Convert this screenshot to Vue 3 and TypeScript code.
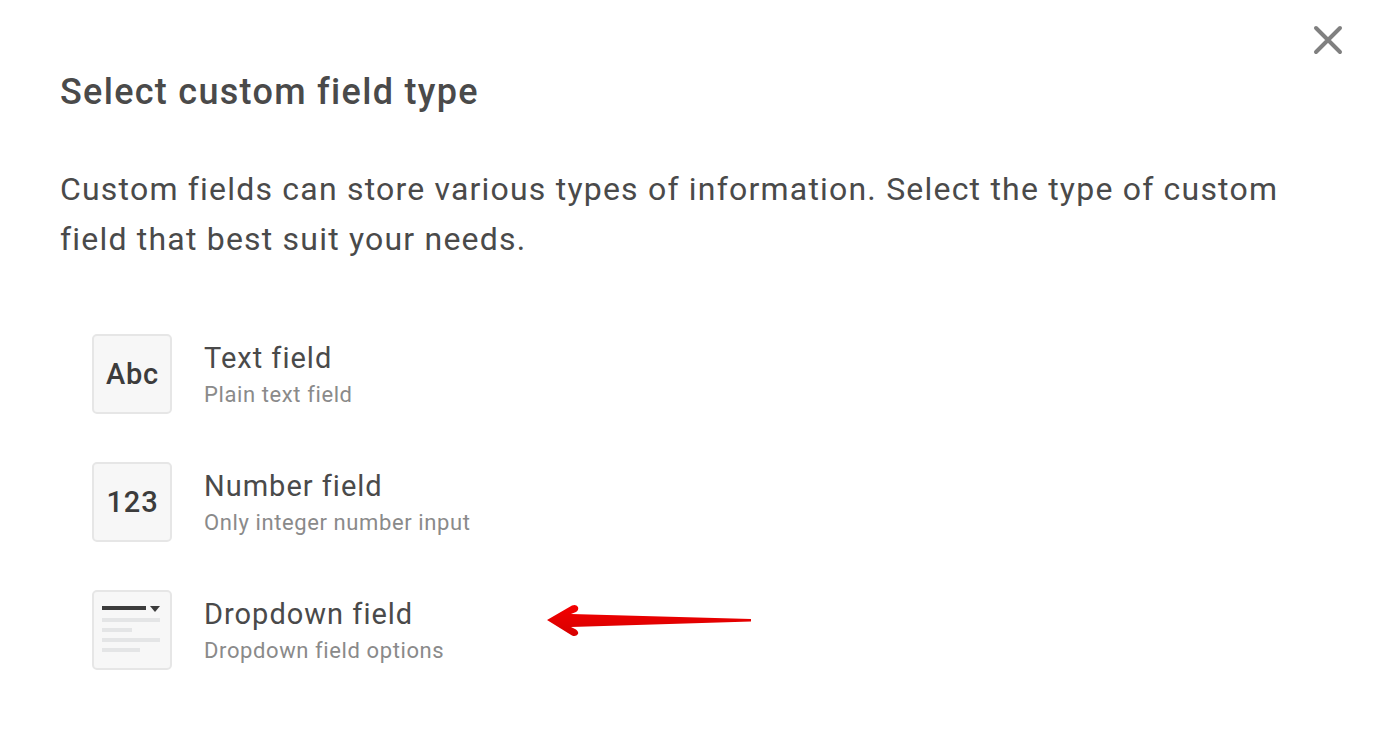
<script setup lang="ts">
interface FieldType {
  name: string
  hint: string
  badge?: string
}

const fieldTypes: FieldType[] = [
  { name: 'Text field', hint: 'Plain text field', badge: 'Abc' },
  { name: 'Number field', hint: 'Only integer number input', badge: '123' },
  { name: 'Dropdown field', hint: 'Dropdown field options' },
]
</script>

<template>
  <div class="dialog">
    <svg class="close" width="30" height="30" viewBox="0 0 30 30" aria-label="Close">
      <path d="M3 3 L27 27 M27 3 L3 27" stroke="#808080" stroke-width="4" stroke-linecap="round" fill="none" />
    </svg>

    <h1 class="title">Select custom field type</h1>
    <p class="intro">
      Custom fields can store various types of information. Select the type of custom field that best suit your needs.
    </p>

    <ul class="types">
      <li v-for="field in fieldTypes" :key="field.name" class="type">
        <div class="badge">
          <template v-if="field.badge">{{ field.badge }}</template>
          <svg v-else width="76" height="76" viewBox="0 0 76 76">
            <rect x="8" y="14" width="44" height="4" fill="#3c3c3c" />
            <path d="M56 14 H66 L61 20 Z" fill="#3c3c3c" />
            <rect x="8" y="26" width="58" height="4" fill="#e4e5e6" />
            <rect x="8" y="36" width="30" height="4" fill="#e4e5e6" />
            <rect x="8" y="46" width="58" height="4" fill="#e4e5e6" />
            <rect x="8" y="56" width="38" height="4" fill="#e4e5e6" />
          </svg>
        </div>
        <div class="type-text">
          <div class="type-name">{{ field.name }}</div>
          <div class="type-hint">{{ field.hint }}</div>
        </div>
      </li>
    </ul>

    <svg class="arrow" width="210" height="36" viewBox="0 0 210 36">
      <defs>
        <linearGradient id="arrowFill" x1="0" y1="0" x2="0" y2="1">
          <stop offset="0" stop-color="#f40000" />
          <stop offset="1" stop-color="#d60000" />
        </linearGradient>
      </defs>
      <path
        d="M1 18 L26 3.5 Q30 2 32 5 Q33 8 30 10 L25 12 L205 17 L205 19.5 L25 25 L30 27.5 Q33 30 32 32 Q30 35 26 33.5 Z"
        fill="url(#arrowFill)"
      />
    </svg>
  </div>
</template>

<style scoped>
.dialog {
  position: relative;
  box-sizing: border-box;
  height: 750px;
  padding: 69px 100px 0 60px;
  color: #4a4a4a;
  font-family: Roboto, "Liberation Sans", sans-serif;
  overflow: hidden;
}

.close {
  position: absolute;
  top: 25px;
  left: 1313px;
}

.title {
  margin: 0;
  font-size: 36px;
  line-height: 46px;
  font-weight: 500;
  letter-spacing: 1.3px;
}

.intro {
  margin: 49px 0 0;
  width: 1240px;
  font-size: 32px;
  line-height: 50px;
  letter-spacing: 1.2px;
}

.types {
  list-style: none;
  margin: 70px 0 0;
  padding: 0 0 0 32px;
  display: flex;
  flex-direction: column;
  gap: 48px;
}

.type {
  display: flex;
  align-items: center;
  gap: 32px;
}

.badge {
  box-sizing: border-box;
  width: 80px;
  height: 80px;
  padding-left: 1px;
  display: flex;
  align-items: center;
  justify-content: center;
  background: #f7f7f7;
  border: 2px solid #e6e6e6;
  border-radius: 5px;
  color: #3c3c3c;
  font-size: 29px;
  font-weight: 500;
  letter-spacing: 0.8px;
}

.badge svg {
  margin-left: -1px;
}

.type-text {
  padding-top: 1px;
}

.type-name {
  font-size: 29px;
  line-height: 38px;
  letter-spacing: 1px;
}

.type-hint {
  padding-top: 2px;
  font-size: 22px;
  line-height: 32px;
  letter-spacing: 0.6px;
  color: #8a8a8a;
}

.arrow {
  position: absolute;
  top: 602px;
  left: 546px;
}
</style>

<style>
body {
  background: #fff;
}
</style>
